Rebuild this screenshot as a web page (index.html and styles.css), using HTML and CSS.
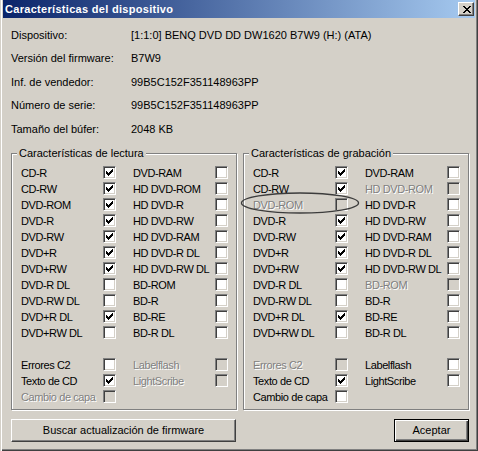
FILE: index.html
```html
<!DOCTYPE html>
<html lang="es">
<head>
<meta charset="utf-8">
<title>Características del dispositivo</title>
<link rel="stylesheet" href="styles.css">
</head>
<body>
<div class="window">
  <div class="titlebar">
    <span class="title">Características del dispositivo</span>
    <span class="close"><svg width="8" height="7" viewBox="0 0 8 7"><path d="M0 0h2v1h-2z M6 0h2v1h-2z M1 1h2v1h-2z M5 1h2v1h-2z M2 2h4v1h-4z M3 3h2v1h-2z M2 4h4v1h-4z M1 5h2v1h-2z M5 5h2v1h-2z M0 6h2v1h-2z M6 6h2v1h-2z" fill="#000"/></svg></span>
  </div>
  <div class="client">
    <div class="info">
      <span>Dispositivo:</span><span>[1:1:0] BENQ DVD DD DW1620 B7W9 (H:) (ATA)</span>
      <span>Versión del firmware:</span><span>B7W9</span>
      <span>Inf. de vendedor:</span><span>99B5C152F351148963PP</span>
      <span>Número de serie:</span><span>99B5C152F351148963PP</span>
      <span>Tamaño del búfer:</span><span>2048 KB</span>
    </div>
    <div class="groups">
      <div class="group">
        <span class="legend">Características de lectura</span>
        <div class="row"><div class="item"><span class="lbl">CD-R</span><span class="cb on"></span></div><div class="item"><span class="lbl">DVD-RAM</span><span class="cb"></span></div></div>
        <div class="row"><div class="item"><span class="lbl">CD-RW</span><span class="cb on"></span></div><div class="item"><span class="lbl">HD DVD-ROM</span><span class="cb"></span></div></div>
        <div class="row"><div class="item"><span class="lbl">DVD-ROM</span><span class="cb on"></span></div><div class="item"><span class="lbl">HD DVD-R</span><span class="cb"></span></div></div>
        <div class="row"><div class="item"><span class="lbl">DVD-R</span><span class="cb on"></span></div><div class="item"><span class="lbl">HD DVD-RW</span><span class="cb"></span></div></div>
        <div class="row"><div class="item"><span class="lbl">DVD-RW</span><span class="cb on"></span></div><div class="item"><span class="lbl">HD DVD-RAM</span><span class="cb"></span></div></div>
        <div class="row"><div class="item"><span class="lbl">DVD+R</span><span class="cb on"></span></div><div class="item"><span class="lbl">HD DVD-R DL</span><span class="cb"></span></div></div>
        <div class="row"><div class="item"><span class="lbl">DVD+RW</span><span class="cb on"></span></div><div class="item"><span class="lbl">HD DVD-RW DL</span><span class="cb"></span></div></div>
        <div class="row"><div class="item"><span class="lbl">DVD-R DL</span><span class="cb"></span></div><div class="item"><span class="lbl">BD-ROM</span><span class="cb"></span></div></div>
        <div class="row"><div class="item"><span class="lbl">DVD-RW DL</span><span class="cb"></span></div><div class="item"><span class="lbl">BD-R</span><span class="cb"></span></div></div>
        <div class="row"><div class="item"><span class="lbl">DVD+R DL</span><span class="cb on"></span></div><div class="item"><span class="lbl">BD-RE</span><span class="cb"></span></div></div>
        <div class="row"><div class="item"><span class="lbl">DVD+RW DL</span><span class="cb"></span></div><div class="item"><span class="lbl">BD-R DL</span><span class="cb"></span></div></div>
        <div class="row spacer"></div>
        <div class="row"><div class="item"><span class="lbl">Errores C2</span><span class="cb"></span></div><div class="item dis"><span class="lbl">Labelflash</span><span class="cb"></span></div></div>
        <div class="row"><div class="item"><span class="lbl">Texto de CD</span><span class="cb on"></span></div><div class="item dis"><span class="lbl">LightScribe</span><span class="cb"></span></div></div>
        <div class="row"><div class="item dis"><span class="lbl">Cambio de capa</span><span class="cb"></span></div></div>
      </div>
      <div class="group">
        <span class="legend">Características de grabación</span>
        <div class="row"><div class="item"><span class="lbl">CD-R</span><span class="cb on"></span></div><div class="item"><span class="lbl">DVD-RAM</span><span class="cb"></span></div></div>
        <div class="row"><div class="item"><span class="lbl">CD-RW</span><span class="cb on"></span></div><div class="item dis"><span class="lbl">HD DVD-ROM</span><span class="cb"></span></div></div>
        <div class="row"><div class="item dis"><span class="lbl">DVD-ROM</span><span class="cb"></span></div><div class="item"><span class="lbl">HD DVD-R</span><span class="cb"></span></div></div>
        <div class="row"><div class="item"><span class="lbl">DVD-R</span><span class="cb on"></span></div><div class="item"><span class="lbl">HD DVD-RW</span><span class="cb"></span></div></div>
        <div class="row"><div class="item"><span class="lbl">DVD-RW</span><span class="cb on"></span></div><div class="item"><span class="lbl">HD DVD-RAM</span><span class="cb"></span></div></div>
        <div class="row"><div class="item"><span class="lbl">DVD+R</span><span class="cb on"></span></div><div class="item"><span class="lbl">HD DVD-R DL</span><span class="cb"></span></div></div>
        <div class="row"><div class="item"><span class="lbl">DVD+RW</span><span class="cb on"></span></div><div class="item"><span class="lbl">HD DVD-RW DL</span><span class="cb"></span></div></div>
        <div class="row"><div class="item"><span class="lbl">DVD-R DL</span><span class="cb"></span></div><div class="item dis"><span class="lbl">BD-ROM</span><span class="cb"></span></div></div>
        <div class="row"><div class="item"><span class="lbl">DVD-RW DL</span><span class="cb"></span></div><div class="item"><span class="lbl">BD-R</span><span class="cb"></span></div></div>
        <div class="row"><div class="item"><span class="lbl">DVD+R DL</span><span class="cb on"></span></div><div class="item"><span class="lbl">BD-RE</span><span class="cb"></span></div></div>
        <div class="row"><div class="item"><span class="lbl">DVD+RW DL</span><span class="cb"></span></div><div class="item"><span class="lbl">BD-R DL</span><span class="cb"></span></div></div>
        <div class="row spacer"></div>
        <div class="row"><div class="item dis"><span class="lbl">Errores C2</span><span class="cb"></span></div><div class="item"><span class="lbl">Labelflash</span><span class="cb"></span></div></div>
        <div class="row"><div class="item"><span class="lbl">Texto de CD</span><span class="cb on"></span></div><div class="item"><span class="lbl">LightScribe</span><span class="cb"></span></div></div>
        <div class="row"><div class="item"><span class="lbl">Cambio de capa</span><span class="cb"></span></div></div>
      </div>
    </div>
    <div class="buttons">
      <button class="btn wide">Buscar actualización de firmware</button>
      <button class="btn default">Aceptar</button>
    </div>
  </div>
  <svg class="annotation" width="122" height="24" viewBox="0 0 122 24"><ellipse cx="61" cy="12" rx="58.5" ry="10" fill="none" stroke="#3c3c3c" stroke-width="1.4"/></svg>
</div>
</body>
</html>
```
FILE: styles.css
```css
* { box-sizing: border-box; }
html, body { margin: 0; padding: 0; }
body {
  font-family: "Liberation Sans", Arial, sans-serif;
  font-size: 11px;
  color: #000;
  background: #d4d0c8;
}
.window {
  position: relative;
  width: 478px;
  height: 451px;
  background: #d4d0c8;
  padding: 0 3px 3px 3px;
  box-shadow: inset 1px 0 0 #d4d0c8, inset 2px 0 0 #fff, inset -1px -1px 0 #404040, inset -2px -2px 0 #808080;
}
.titlebar {
  height: 18px;
  display: flex;
  align-items: center;
  justify-content: space-between;
  padding: 0 1px 0 2px;
  background: linear-gradient(to right, #0a246a, #a6caf0);
}
.title {
  color: #fff;
  font-weight: bold;
  font-size: 11px;
  letter-spacing: 0.3px;
}
.close {
  width: 16px;
  height: 14px;
  display: flex;
  align-items: center;
  justify-content: center;
  background: #d4d0c8;
  border: 1px solid;
  border-color: #fff #404040 #404040 #fff;
  box-shadow: inset -1px -1px 0 #808080;
  padding-left: 1px;
}
.close svg { display: block; }
.client {
  padding: 5px 0 0 8px;
}
.info {
  display: grid;
  grid-template-columns: 120px auto;
  grid-auto-rows: 23.5px;
  align-items: center;
}
.groups {
  margin-top: 12px;
  display: flex;
  gap: 6px;
}
.group {
  position: relative;
  width: 226px;
  height: 257px;
  border: 1px solid #808080;
  box-shadow: inset 1px 1px 0 #fff, 1px 1px 0 #fff;
  padding: 11px 0 0 9px;
}
.legend {
  position: absolute;
  top: -7px;
  left: 5px;
  padding: 0 2px 0 2px;
  line-height: 13px;
  background: #d4d0c8;
}
.row {
  display: flex;
  gap: 17px;
  height: 16px;
}
.item {
  display: flex;
  width: 95px;
  height: 16px;
}
.lbl {
  width: 82px;
  line-height: 16px;
  white-space: nowrap;
  letter-spacing: -0.4px;
}
.cb {
  width: 13px;
  height: 13px;
  margin-top: 1px;
  flex: none;
  background: #fff;
  border: 1px solid;
  border-color: #808080 #fff #fff #808080;
  box-shadow: inset 1px 1px 0 #404040, inset -1px -1px 0 #d4d0c8;
  padding: 2px;
}
.cb.on {
  background: #fff url("data:image/svg+xml,%3Csvg xmlns='http://www.w3.org/2000/svg' width='7' height='7' viewBox='0 0 7 7' shape-rendering='crispEdges'%3E%3Cpath d='M6 0h1v1h-1z M5 1h2v1h-2z M0 2h1v1h-1z M4 2h3v1h-3z M0 3h2v1h-2z M3 3h3v1h-3z M0 4h5v1h-5z M1 5h3v1h-3z M2 6h1v1h-1z' fill='%23000'/%3E%3C/svg%3E") no-repeat 2px 2px;
}
.dis .lbl {
  color: #808080;
  text-shadow: 1px 1px 0 #fff;
}
.dis .cb {
  background: #d4d0c8;
}
.buttons {
  margin-top: 9px;
  width: 458px;
  display: flex;
  justify-content: space-between;
}
.btn {
  font-family: inherit;
  font-size: 11px;
  color: #000;
  height: 23px;
  padding: 0;
  background: #d4d0c8;
  border: 1px solid;
  border-color: #fff #404040 #404040 #fff;
  box-shadow: inset -1px -1px 0 #808080;
}
.btn.wide { width: 225px; }
.btn.default {
  width: 75px;
  border: 1px solid #000;
  box-shadow: inset 1px 1px 0 #fff, inset -1px -1px 0 #404040, inset -2px -2px 0 #808080;
}
.annotation {
  position: absolute;
  left: 239px;
  top: 191px;
}
```
